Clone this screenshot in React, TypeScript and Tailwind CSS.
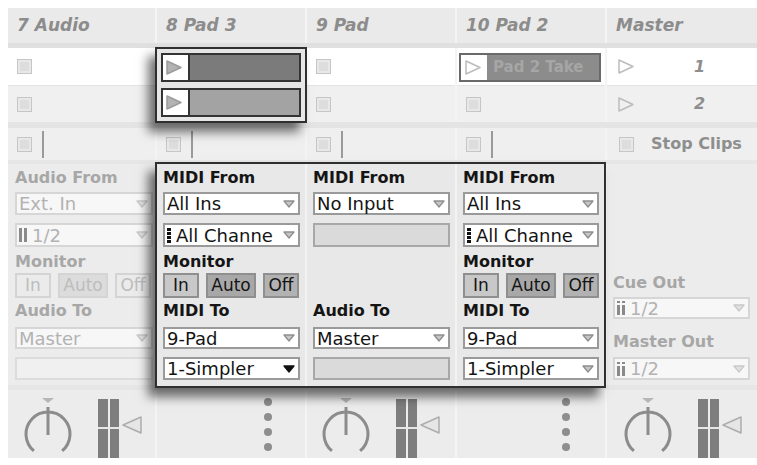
import type { ReactNode } from 'react';

// Session view slice: track headers, clip slots, the open clip stack on "8 Pad 3",
// the I/O routing block for three MIDI tracks and the mixer strip row.

type Tone = 'on' | 'off';

const HEADERS = ['7 Audio', '8 Pad 3', '9 Pad', '10 Pad 2', 'Master'];

export default function App() {
  return (
    <div className="min-h-screen bg-white pt-[8px] pl-[8px] [font-family:'DejaVu_Sans',Verdana,sans-serif]">
      <div className="grid w-[749px] grid-cols-[147px_148px_148px_148px_150px] grid-rows-[35px_5px_38px_36px_6px_32px_4px_221px_5px_68px] gap-x-[2px] bg-[#f4f4f4]">
        {HEADERS.map((h) => (
          <Header key={h} name={h} />
        ))}
        <Band tone="bg-[#e0e0e0]" />

        {/* clip row 1 */}
        <EmptySlot />
        <ClipStack />
        <EmptySlot />
        <ClipSlot name="Pad 2 Take" />
        <SceneSlot n="1" />

        {/* clip row 2 */}
        <EmptySlot alt />
        <EmptySlot alt />
        <EmptySlot alt />
        <SceneSlot n="2" alt />

        <Band tone="bg-[#e4e4e4]" />

        {/* stop buttons */}
        <StopCell />
        <StopCell />
        <StopCell />
        <StopCell />
        <div className="flex items-center bg-[#efefef] pl-[12px]">
          <Square />
          <span className="ml-[17px] text-[16px] font-bold text-[#8e8e8e]">Stop Clips</span>
        </div>

        <Band tone="bg-[#e6e6e6]" />

        {/* input / output */}
        <div className="bg-[#ececec]">
          <IOColumn
            tone="off"
            fromLabel="Audio From"
            from="Ext. In"
            channel={
              <>
                <Stereo color="#8a8a8a" />
                <span>1/2</span>
              </>
            }
            monitor
            toLabel="Audio To"
            to="Master"
            wide
          />
        </div>
        <RoutingPanel />
        <MasterIO />

        <Band tone="bg-[#e6e6e6]" />

        {/* mixer */}
        <Strip knob={40} meter={90} />
        <Dots x={111} />
        <Strip knob={39} meter={89} />
        <Dots x={109} />
        <Strip knob={41} meter={91} />
      </div>
    </div>
  );
}

function Header({ name }: { name: string }) {
  return (
    <div className="flex items-center bg-[#eaeaea] pl-[9px] text-[17px] font-bold italic text-[#8c8c8c]">
      {name}
    </div>
  );
}

function Band({ tone }: { tone: string }) {
  return <div className={`col-span-5 ${tone}`} />;
}

function Square() {
  return (
    <span className="block h-[15px] w-[15px] border border-[#c6c6c6] bg-[#dddddd] shadow-[inset_0_0_0_2px_#e8e8e8]" />
  );
}

function EmptySlot({ alt }: { alt?: boolean }) {
  return (
    <div
      className={`flex items-center pl-[9px] ${alt ? 'bg-[#f0f0f0]' : 'border-b border-[#e4e4e4] bg-white'}`}
    >
      <Square />
    </div>
  );
}

function StopCell() {
  return (
    <div className="flex items-center gap-[10px] bg-[#efefef] pl-[9px]">
      <Square />
      <span className="block h-[27px] w-[2px] bg-[#9a9a9a]" />
    </div>
  );
}

function PlayOutline({ fill = 'none', stroke = '#bcbcbc' }: { fill?: string; stroke?: string }) {
  return (
    <svg width="16" height="15" viewBox="0 0 16 15" className="block">
      <polygon points="1,1 15,7.5 1,14" fill={fill} stroke={stroke} strokeWidth="1.5" strokeLinejoin="round" />
    </svg>
  );
}

function SceneSlot({ n, alt }: { n: string; alt?: boolean }) {
  return (
    <div className={`flex items-center pl-[11px] ${alt ? 'bg-[#f0f0f0]' : 'border-b border-[#e4e4e4] bg-white'}`}>
      <PlayOutline />
      <span className="flex-1 pl-[8px] text-center text-[16px] font-bold italic text-[#8e8e8e]">{n}</span>
    </div>
  );
}

function ClipStack() {
  return (
    <div className="relative z-10 row-span-2 -mx-[2px] -my-px flex flex-col gap-[6px] border-2 border-[#2f2f2f] bg-[#e6e6e6] p-[4px] shadow-[-7px_9px_10px_rgba(0,0,0,0.55)]">
      <Clip fill="bg-[#7b7b7b]" />
      <Clip fill="bg-[#a3a3a3]" />
    </div>
  );
}

function Clip({ fill }: { fill: string }) {
  return (
    <div className="flex h-[29px] border-2 border-[#343434] bg-white">
      <div className="flex w-[25px] items-center pl-[3px]">
        <PlayOutline fill="#b3b3b3" stroke="#9c9c9c" />
      </div>
      <div className={`flex-1 border-l-2 border-[#343434] ${fill}`} />
    </div>
  );
}

function ClipSlot({ name }: { name: string }) {
  return (
    <div className="flex border-b border-[#e4e4e4] bg-white pb-[3px] pl-[2px] pr-[4px] pt-[5px]">
      <div className="flex flex-1 border-2 border-[#6a6a6a] bg-white">
        <div className="flex w-[26px] items-center pl-[4px]">
          <PlayOutline />
        </div>
        <div className="flex flex-1 items-center bg-[#8c8c8c] pl-[6px] text-[15px] font-bold text-[#a6a6a6]">
          {name}
        </div>
      </div>
    </div>
  );
}

/* ---------- routing widgets ---------- */

function Label({ tone, children, className = '' }: { tone: Tone; children: ReactNode; className?: string }) {
  return (
    <div
      className={`h-4 whitespace-nowrap text-[16px] font-bold leading-4 ${tone === 'on' ? 'text-[#151515]' : 'text-[#a7a7a7]'} ${className}`}
    >
      {children}
    </div>
  );
}

function Arrow({ kind }: { kind: 'gray' | 'black' | 'faded' }) {
  const fill = kind === 'black' ? '#111111' : kind === 'gray' ? '#c6c6c6' : '#e2e2e2';
  const stroke = kind === 'black' ? '#111111' : kind === 'gray' ? '#8e8e8e' : '#c9c9c9';
  return (
    <svg width="12" height="8" viewBox="0 0 12 8" className="block shrink-0">
      <polygon points="1,1 11,1 6,7" fill={fill} stroke={stroke} strokeWidth="1.3" strokeLinejoin="round" />
    </svg>
  );
}

function Drop({
  tone,
  h,
  arrow,
  className = '',
  children,
}: {
  tone: Tone;
  h: string;
  arrow?: 'gray' | 'black' | 'faded';
  className?: string;
  children: ReactNode;
}) {
  const box = tone === 'on' ? 'border-[#9a9a9a] bg-white text-[#141414]' : 'border-[#d6d6d6] bg-[#f7f7f7] text-[#b2b2b2]';
  return (
    <div className={`flex items-center border-2 pl-[2px] pr-[3px] text-[18px] leading-[19px] ${box} ${h} ${className}`}>
      <div className="flex min-w-0 flex-1 items-center gap-[5px] whitespace-nowrap">{children}</div>
      {arrow && <Arrow kind={arrow} />}
    </div>
  );
}

function EmptyBox({ tone, h, className = '' }: { tone: Tone; h: string; className?: string }) {
  return (
    <div
      className={`border-2 ${tone === 'on' ? 'border-[#a8a8a8] bg-[#dadada]' : 'border-[#dcdcdc] bg-[#f0f0f0]'} ${h} ${className}`}
    />
  );
}

function Channels() {
  return (
    <svg width="4" height="15" viewBox="0 0 4 15" className="block shrink-0">
      <rect x="0" y="0" width="4" height="3" fill="#111" />
      <rect x="0" y="4" width="4" height="3" fill="#111" />
      <rect x="0" y="8" width="4" height="3" fill="#111" />
      <rect x="0" y="12" width="4" height="3" fill="#111" />
    </svg>
  );
}

function Stereo({ color, dotted }: { color: string; dotted?: boolean }) {
  return (
    <svg width="8" height="14" viewBox="0 0 8 14" className="block shrink-0">
      {dotted ? (
        <>
          <rect x="0" y="0" width="3" height="2" fill={color} />
          <rect x="5" y="0" width="3" height="2" fill={color} />
          <rect x="0" y="4" width="3" height="10" fill={color} />
          <rect x="5" y="4" width="3" height="10" fill={color} />
        </>
      ) : (
        <>
          <rect x="0" y="0" width="3" height="14" fill={color} />
          <rect x="5" y="0" width="3" height="14" fill={color} />
        </>
      )}
    </svg>
  );
}

function Monitor({ tone }: { tone: Tone }) {
  const on = tone === 'on';
  const base = `flex h-[25px] items-center justify-center border-2 text-[17px] leading-none ${on ? 'border-[#8f8f8f] text-[#151515]' : 'border-[#d4d4d4] text-[#bdbdbd]'}`;
  return (
    <div className="mt-[3px] flex gap-[7px]">
      <div className={`w-[36px] shrink-0 ${base} ${on ? 'bg-[#c8c8c8]' : 'bg-[#ebebeb]'}`}>In</div>
      <div className={`w-[50px] shrink-0 ${base} ${on ? 'bg-[#a8a8a8]' : 'bg-[#dcdcdc]'}`}>Auto</div>
      <div className={`w-[36px] shrink-0 ${base} ${on ? 'bg-[#b2b2b2]' : 'bg-[#ebebeb]'}`}>Off</div>
    </div>
  );
}

function IOColumn({
  tone,
  fromLabel,
  from,
  channel,
  monitor,
  toLabel,
  to,
  sub,
  wide,
}: {
  tone: Tone;
  fromLabel: string;
  from: string;
  channel?: ReactNode;
  monitor: boolean;
  toLabel: string;
  to: string;
  sub?: { text: string; arrow: 'gray' | 'black' };
  wide?: boolean;
}) {
  const arrow = tone === 'on' ? 'gray' : 'faded';
  return (
    <div className={`flex flex-col pt-[6px] ${wide ? 'pl-[7px] pr-[2px]' : 'pl-[6px] pr-[5px]'}`}>
      <Label tone={tone}>{fromLabel}</Label>
      <Drop tone={tone} h="h-[23px]" arrow={arrow} className="mt-[6px]">
        {from}
      </Drop>
      {channel ? (
        <Drop tone={tone} h="h-[24px]" arrow={arrow} className="mt-[8px]">
          {channel}
        </Drop>
      ) : (
        <EmptyBox tone={tone} h="h-[24px]" className="mt-[8px]" />
      )}
      {monitor ? (
        <>
          <Label tone={tone} className="mt-[7px]">
            Monitor
          </Label>
          <Monitor tone={tone} />
        </>
      ) : (
        <div className="h-[51px]" />
      )}
      <Label tone={tone} className="mt-[5px]">
        {toLabel}
      </Label>
      <Drop tone={tone} h="h-[22px]" arrow={arrow} className="mt-[8px]">
        {to}
      </Drop>
      {sub ? (
        <Drop tone={tone} h="h-[23px]" arrow={sub.arrow} className="mt-[8px]">
          {sub.text}
        </Drop>
      ) : (
        <EmptyBox tone={tone} h="h-[23px]" className="mt-[8px]" />
      )}
    </div>
  );
}

// The channel menu is narrow, so Live shows the clipped name.
const channelItem = (
  <>
    <Channels />
    <span>All Channe</span>
  </>
);

function RoutingPanel() {
  return (
    <div className="relative z-10 col-span-3 -mb-[3px] -ml-[2px] -mr-px -mt-[2px] grid grid-cols-[148px_148px_1fr] gap-x-[2px] border-2 border-[#2f2f2f] bg-[#f3f3f3] shadow-[-7px_9px_10px_rgba(0,0,0,0.55)]">
      <div className="bg-[#e8e8e8]">
        <IOColumn
          tone="on"
          fromLabel="MIDI From"
          from="All Ins"
          channel={channelItem}
          monitor
          toLabel="MIDI To"
          to="9-Pad"
          sub={{ text: '1-Simpler', arrow: 'black' }}
        />
      </div>
      <div className="bg-[#e8e8e8]">
        <IOColumn tone="on" fromLabel="MIDI From" from="No Input" monitor={false} toLabel="Audio To" to="Master" />
      </div>
      <div className="bg-[#e8e8e8]">
        <IOColumn
          tone="on"
          fromLabel="MIDI From"
          from="All Ins"
          channel={channelItem}
          monitor
          toLabel="MIDI To"
          to="9-Pad"
          sub={{ text: '1-Simpler', arrow: 'gray' }}
        />
      </div>
    </div>
  );
}

function MasterIO() {
  return (
    <div className="flex flex-col bg-[#ececec] pl-[6px] pr-[7px] pt-[111px]">
      <Label tone="off">Cue Out</Label>
      <Drop tone="off" h="h-[22px]" arrow="faded" className="mt-[6px]">
        <Stereo color="#8a8a8a" dotted />
        <span>1/2</span>
      </Drop>
      <Label tone="off" className="mt-[15px]">
        Master Out
      </Label>
      <Drop tone="off" h="h-[23px]" arrow="faded" className="mt-[7px]">
        <Stereo color="#8a8a8a" dotted />
        <span>1/2</span>
      </Drop>
    </div>
  );
}

/* ---------- mixer ---------- */

function Strip({ knob, meter }: { knob: number; meter: number }) {
  const cy = 44;
  return (
    <div className="bg-[#ececec]">
      <svg width="150" height="68" viewBox="0 0 150 68" className="block">
        <polygon points={`${knob - 6},8 ${knob + 6},8 ${knob},13`} fill="#b6b6b6" />
        <path
          d={`M${knob - 14.1} ${cy + 16.9} A22 22 0 1 1 ${knob + 14.1} ${cy + 16.9}`}
          fill="none"
          stroke="#8c8c8c"
          strokeWidth="3"
        />
        <line x1={knob} y1="17" x2={knob} y2={cy + 1} stroke="#8c8c8c" strokeWidth="3" />
        <rect x={meter} y="9" width="10" height="59" fill="#7e7e7e" />
        <rect x={meter + 12} y="9" width="9" height="59" fill="#7e7e7e" />
        <rect x={meter} y="37" width="21" height="2" fill="#e6e6e6" />
        <polygon
          points={`${meter + 43},27 ${meter + 43},43 ${meter + 25},35`}
          fill="#e6e6e6"
          stroke="#adadad"
          strokeWidth="1.5"
          strokeLinejoin="round"
        />
      </svg>
    </div>
  );
}

function Dots({ x }: { x: number }) {
  return (
    <div className="bg-[#ececec]">
      <svg width="148" height="68" viewBox="0 0 148 68" className="block">
        {[12, 27, 42, 57].map((y) => (
          <circle key={y} cx={x} cy={y} r="4" fill="#8e8e8e" />
        ))}
      </svg>
    </div>
  );
}
